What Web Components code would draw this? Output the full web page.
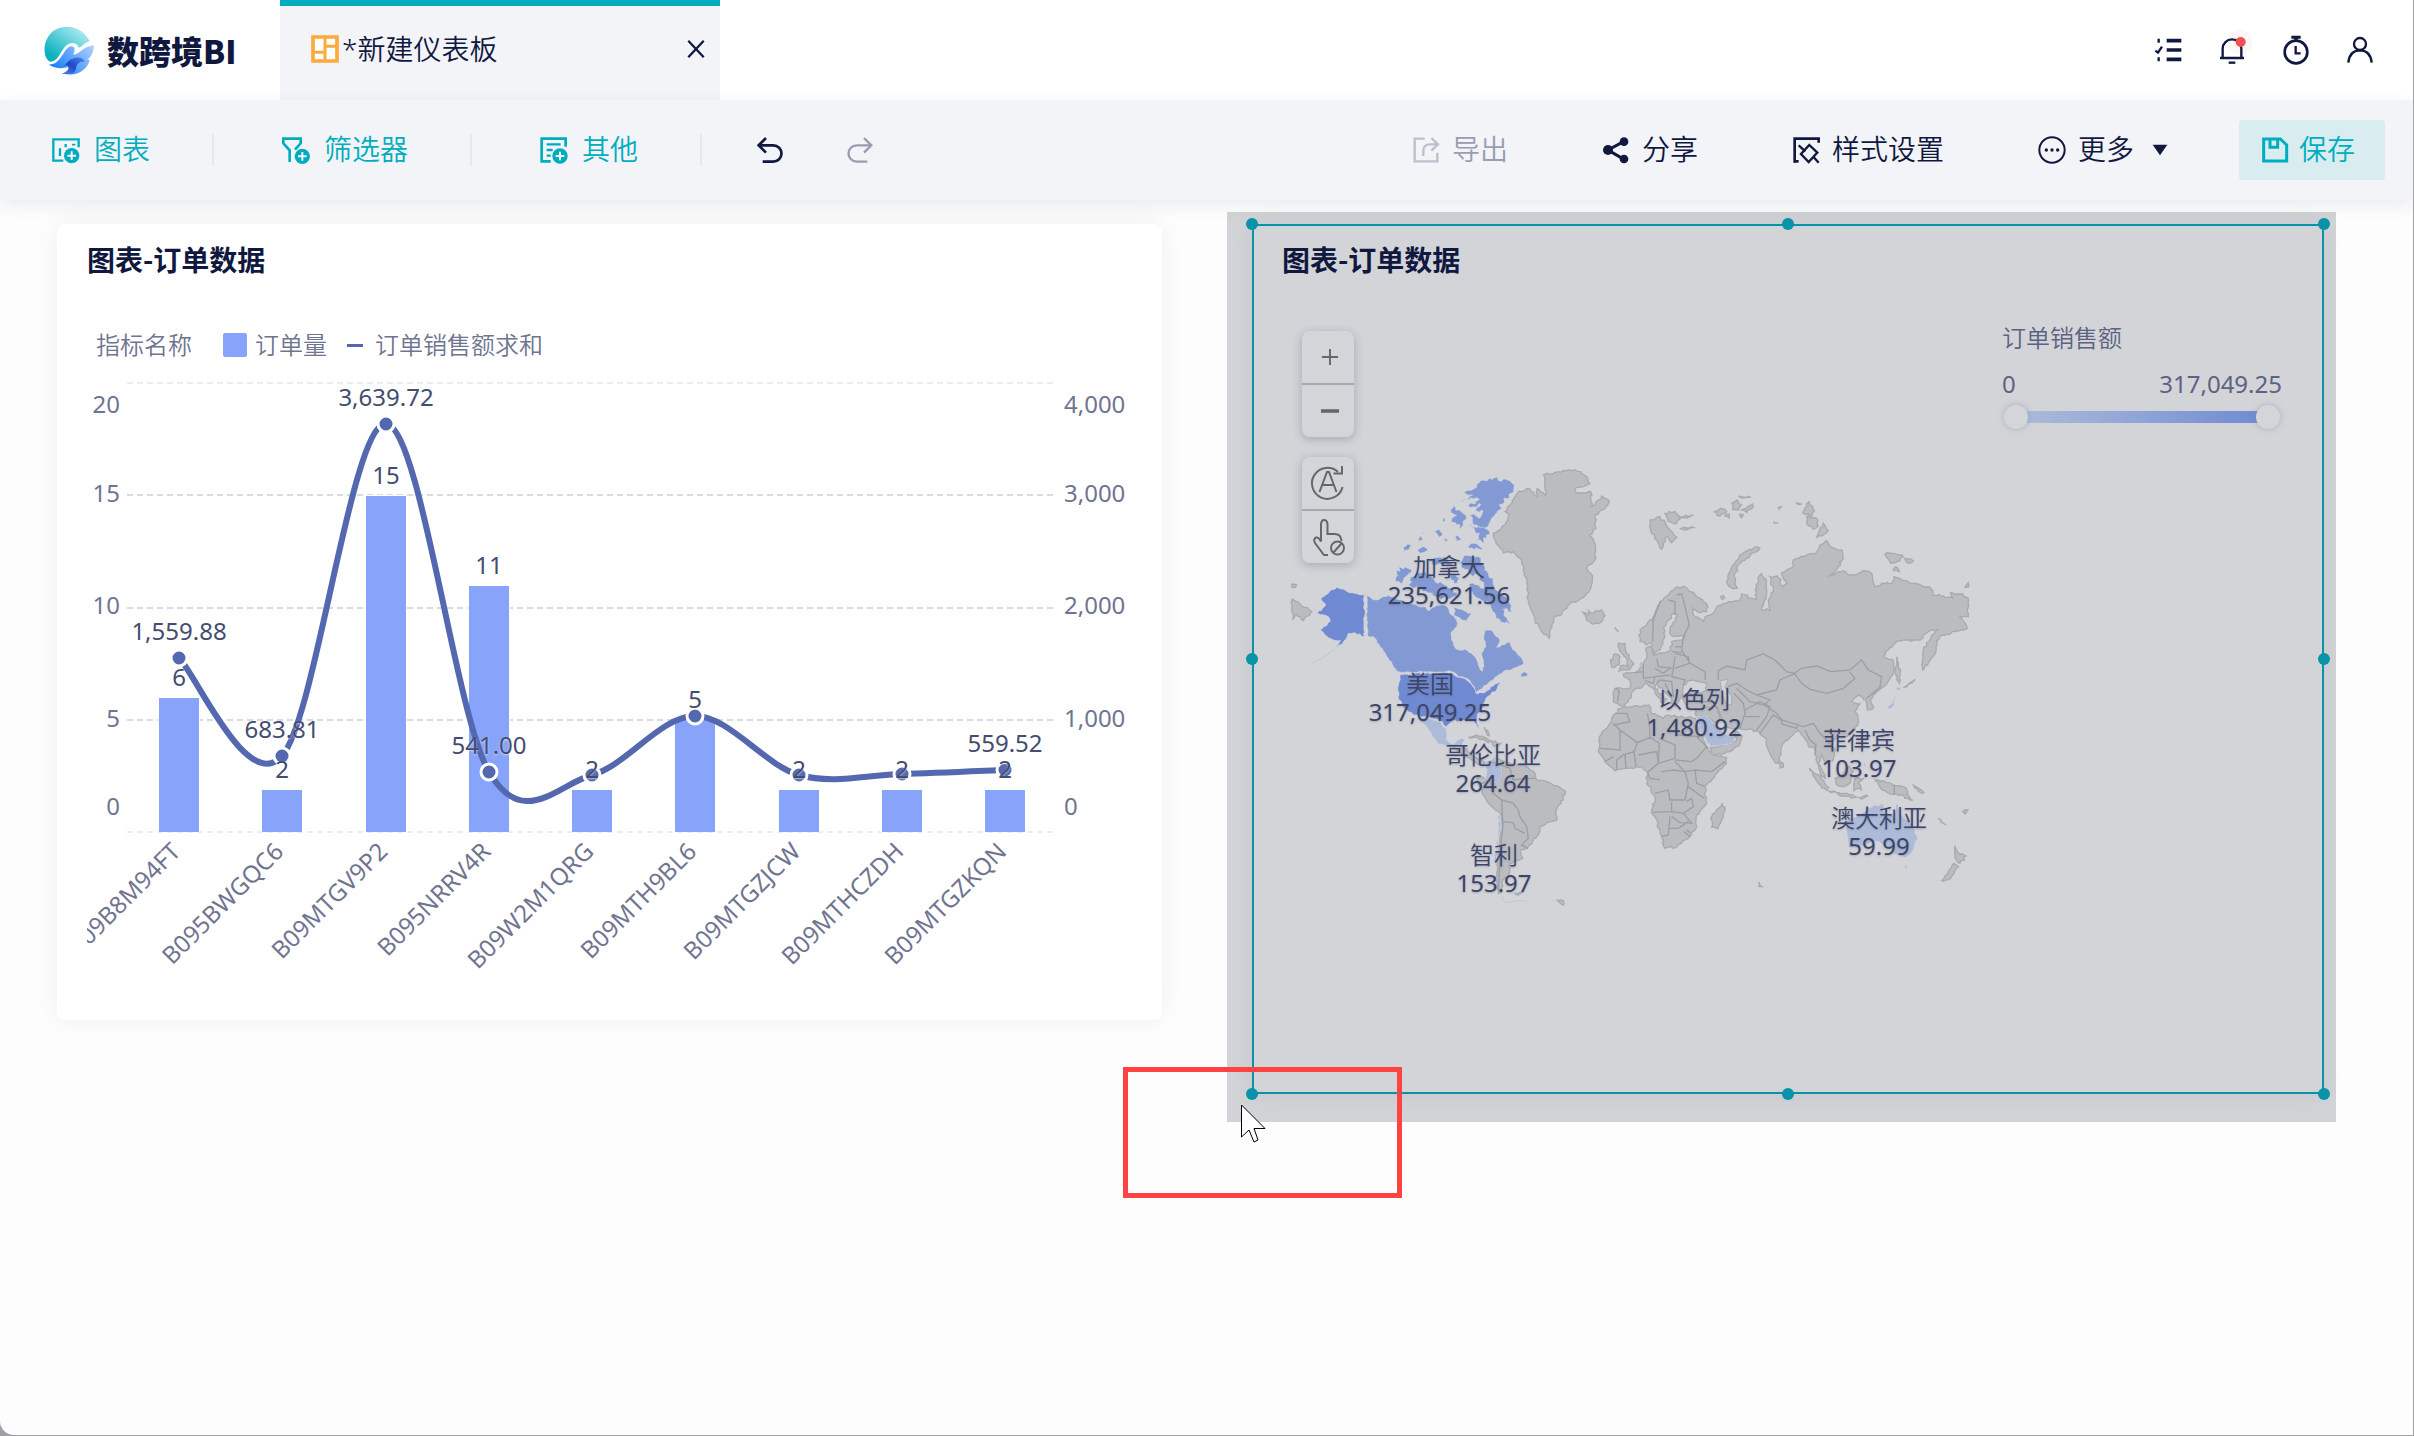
<!DOCTYPE html>
<html lang="zh-CN">
<head>
<meta charset="utf-8">
<title>新建仪表板</title>
<style>
:root{--ink:#101840;--teal:#00adbe;--muted:#6f7490;--label:#3c4468;--bar:#f3f4f8}
html{background:#a0a1a4}
body{margin:0;color:var(--ink);font:350 28px/36px "Noto Sans","Noto Sans CJK SC",sans-serif}
</style>
</head>
<body>
<bi-app></bi-app>
<script>
const define=(name,html,setup)=>{
  const tpl=document.createElement('template');
  tpl.innerHTML=html;
  customElements.define(name,class extends HTMLElement{
    constructor(){
      super();
      this.attachShadow({mode:'open'}).append(tpl.content.cloneNode(true));
    }
    connectedCallback(){
      if(this.ready)return;
      this.ready=true;
      if(setup)setup.call(this,this.shadowRoot);
    }
  });
};

/* ---------- icons: each drawn on an 84-unit square ---------- */
const plus=(x,y)=>`<circle cx="${x}" cy="${y}" r="23" fill="currentColor" stroke="none"/><path d="M${x-13} ${y}h26M${x} ${y-13}v26" stroke="var(--bar)" stroke-width="6"/>`;
const ICONS={
  chart:`<path d="M34 74H4V10H80V34" stroke-width="7"/><path d="M24 37V60M41 24V34" stroke-width="7"/><path d="M60 26h10" stroke-width="5"/>${plus(59,59)}`,
  filter:`<path d="M23 78V43L4 22V8H56V22L39 41" stroke-width="8"/>${plus(61,61)}`,
  other:`<path d="M32 76H5V8H77V32" stroke-width="8"/><path d="M20 25H62M20 42H38M20 59H32" stroke-width="7"/>${plus(60,60)}`,
  undo:`<path d="M30 6L8 28L30 50" stroke-width="8"/><path d="M10 28H52A24 24 0 0 1 52 77H20" stroke-width="8"/>`,
  redo:`<path d="M54 6L76 28L54 50" stroke-width="7"/><path d="M74 28H32A24 24 0 0 0 32 77H64" stroke-width="7"/>`,
  export:`<path d="M38 8H8V76H76V50" stroke-width="7"/><path d="M34 60V44Q34 25 54 25H74" stroke-width="7"/><path d="M58 6L78 25L58 44" stroke-width="7"/>`,
  share:`<path d="M66 16L18 42L66 70" stroke-width="9"/><g fill="currentColor" stroke="none"><circle cx="66" cy="17" r="13"/><circle cx="18" cy="42" r="15"/><circle cx="66" cy="69" r="13"/></g>`,
  style:`<path d="M8 80V8H80V20" stroke-width="8"/><path d="M6 76H20" stroke-width="8"/><path d="M52 27L76 50L50 78L27 54Z" stroke-width="7"/><path d="M20 28L40 46M64 62L80 80" stroke-width="7"/>`,
  more:`<circle cx="42" cy="42" r="38" stroke-width="6"/><g fill="currentColor" stroke="none"><circle cx="25" cy="42" r="5"/><circle cx="42" cy="42" r="5"/><circle cx="59" cy="42" r="5"/></g>`,
  save:`<path d="M8 9H58L77 27V75H8Z" stroke-width="9"/><path d="M27 10V34H50V10" stroke-width="9"/>`,
  caret:`<path d="M20 26H64L42 58Z" fill="currentColor" stroke="none"/>`,
  close:`<path d="M15 13L69 71M69 13L15 71" stroke-width="8"/>`,
  list:`<path d="M38 14H82M38 42H82M38 70H82" stroke-width="11"/><path d="M14 8V20M14 64V76M4 44L12 50L24 32" stroke-width="7"/>`,
  bell:`<path d="M6 66H78M14 64V38A28 28 0 0 1 70 38V64" stroke-width="7"/><path d="M32 80H52" stroke-width="7"/><circle cx="66" cy="18" r="37" fill="#f05050" opacity=".05" stroke="none"/><circle cx="68" cy="18" r="15" fill="#f05050" stroke="none"/>`,
  timer:`<circle cx="42" cy="48" r="34" stroke-width="8"/><path d="M28 4H56M42 4V14" stroke-width="9"/><path d="M41 30V52H56" stroke-width="7"/>`,
  user:`<circle cx="42" cy="24" r="18" stroke-width="7"/><path d="M7 80Q10 44 42 43Q74 44 77 80" stroke-width="7"/>`,
  board:`<path d="M6 6H78V78H6Z" fill="#fff" stroke="#faab3c" stroke-width="11"/><path d="M42 6V78M6 52H42M42 34H78" stroke="#faab3c" stroke-width="9"/>`,
  plus:`<path d="M42 8V76M8 42H76" stroke-width="8"/>`,
  minus:`<path d="M4 42H80" stroke-width="15"/>`,
  auto:`<path d="M71 50A31 31 0 1 1 62 20" stroke-width="4"/><path d="M70 8V23H53" stroke-width="4"/><path d="M25 60L40 20H44L59 60M31 46H53" stroke-width="4"/>`,
  hand:`<path d="M42 78H34L16 54Q12 46 18 43Q24 42 28 51V16Q29 8 34 8Q40 8 41 16V36H56Q68 36 69 50" stroke-width="4"/><circle cx="61" cy="64" r="13" stroke-width="4"/><path d="M53 73L69 55" stroke-width="4"/>`
};
define('bi-icon',`<style>:host{display:inline-block;flex:none;width:28px;height:28px}svg{display:block;width:100%;height:100%;overflow:visible}</style>
<svg viewBox="0 0 84 84" fill="none" stroke="currentColor" aria-hidden="true"></svg>`,function(root){
  root.querySelector('svg').innerHTML=ICONS[this.getAttribute('name')]||'';
});

define('bi-logo',`<style>
:host{display:flex;align-items:center;gap:13px}
svg{width:50px;height:49px;display:block}
span{font:900 32px/40px "Noto Sans CJK SC",sans-serif}
</style>
<svg viewBox="132 76 150 148" aria-hidden="true">
<defs>
<linearGradient id="a" x1="0" y1="1" x2="1" y2="0"><stop offset=".15" stop-color="#0aafbe"/><stop offset="1" stop-color="#c8f6fa"/></linearGradient>
<linearGradient id="b" x1="0" y1=".6" x2="1" y2="0"><stop offset="0" stop-color="#1a80ff"/><stop offset="1" stop-color="#b4d2ff"/></linearGradient>
<linearGradient id="c" x1="0" y1="1" x2="1" y2="0"><stop offset="0" stop-color="#5090ff"/><stop offset=".5" stop-color="#2447c4"/><stop offset="1" stop-color="#4a86f2"/></linearGradient>
</defs>
<path fill="url(#a)" d="M150 184C120 172 126 78 202 78C234 78 258 98 270 122C256 124 248 138 237 142C232 126 212 122 198 136C182 150 176 184 150 184Z"/>
<path fill="url(#b)" d="M146 192C172 194 182 170 196 150C208 134 222 134 224 146C225 154 218 160 222 162C236 164 246 138 282 134C282 152 276 168 262 178L270 178C262 208 236 224 206 222L186 220C198 216 206 210 205 200C186 206 162 204 146 192Z"/>
<path fill="url(#c)" d="M200 188C214 168 246 164 256 184C240 180 230 190 228 204C226 216 214 222 202 222L186 220C204 214 212 204 202 196C192 194 184 198 178 198C188 198 196 194 200 188Z"/>
</svg><span>数跨境BI</span>`);

define('bi-header',`<style>
:host{display:flex;height:100px;background:#fff}
bi-logo{width:236px;padding-left:44px}
.tab{box-sizing:border-box;width:440px;border-top:6px solid var(--teal);background:var(--bar);display:flex;align-items:center;padding:0 12px 8px 31px;gap:3px}
nav{margin-left:auto;display:flex;align-items:center;gap:36px;padding-right:39px}
button{all:unset;display:flex}
button.close{margin-left:auto}
.close bi-icon{width:24px;height:24px}
</style>
<bi-logo></bi-logo>
<div class="tab"><bi-icon name="board"></bi-icon><span>*新建仪表板</span><button class="close" aria-label="关闭"><bi-icon name="close"></bi-icon></button></div>
<nav>
<button aria-label="任务"><bi-icon name="list"></bi-icon></button>
<button aria-label="通知"><bi-icon name="bell"></bi-icon></button>
<button aria-label="计时"><bi-icon name="timer"></bi-icon></button>
<button aria-label="用户"><bi-icon name="user"></bi-icon></button>
</nav>`);

define('tool-button',`<style>
:host{display:block}
button{all:unset;box-sizing:border-box;display:flex;align-items:center;gap:var(--gap,12px);color:inherit}
span{padding-bottom:2px}
:host([disabled]) bi-icon{opacity:.6}
:host([primary]) button{height:60px;padding:0 30px 0 22px;gap:10px;border-radius:4px;background:#d9edf0}
</style><button><span><slot></slot></span></button>`,function(root){
  const icon=document.createElement('bi-icon'),button=root.querySelector('button');
  icon.setAttribute('name',this.getAttribute('icon'));
  button.prepend(icon);
  button.disabled=this.hasAttribute('disabled');
  if(this.title)button.setAttribute('aria-label',this.title);
});

define('bi-toolbar',`<style>
:host{position:relative;z-index:1;display:flex;justify-content:space-between;align-items:center;height:100px;padding:0 28px 0 52px;background:var(--bar);box-shadow:0 6px 16px rgba(20,40,70,.08)}
div{display:flex;align-items:center}
.l{--gap:14px;color:var(--teal)}
i{width:2px;height:32px;background:#e6e8ec;margin:0 68px 0 62px}
.l i:last-of-type{margin-right:54px}
.u{color:var(--ink);width:28px} .r{color:#999cae;margin-left:62px}
.t{gap:94px}
.off{color:#999db2}
.m{gap:12px;margin-right:-29px}
.save{color:var(--teal)}
</style>
<div class="l"><tool-button icon="chart">图表</tool-button><i></i><tool-button icon="filter">筛选器</tool-button><i></i><tool-button icon="other">其他</tool-button><i></i><tool-button class="u" icon="undo" title="撤销"></tool-button><tool-button class="u r" icon="redo" title="重做"></tool-button></div>
<div class="t"><tool-button class="off" icon="export" disabled>导出</tool-button><tool-button icon="share">分享</tool-button><tool-button icon="style">样式设置</tool-button><div class="m"><tool-button icon="more">更多</tool-button><bi-icon name="caret"></bi-icon></div><tool-button class="save" icon="save" primary>保存</tool-button></div>`);

define('chart-card',`<style>
:host{display:block;box-sizing:border-box;padding:17px 30px 20px;border-radius:8px;background:#fff;box-shadow:0 0 26px rgba(20,25,50,.06)}
h2{margin:0;font:700 28px/36px "Noto Sans CJK SC",sans-serif}
</style><h2>图表-订单数据</h2><slot></slot>`);

/* ---------- bar + line chart ---------- */
define('combo-chart',`<style>
:host{display:block;padding-top:53px;color:var(--muted);font-size:24px;line-height:30px}
.legend{display:flex;align-items:center;padding-left:9px;height:30px;margin-bottom:10px}
.bar{width:24px;height:24px;border-radius:2px;background:#87a4fa;margin:0 8px 0 31px}
.line{width:16px;height:3px;background:#5468b0;margin:0 12px 0 20px}
svg{display:block;width:100%;overflow:hidden;font-size:24px;font-weight:400}
.val{fill:#444c70;text-anchor:middle;text-shadow:0 1px 2px rgba(255,255,255,.6)}
</style>
<div class="legend"><span>指标名称</span><i class="bar"></i><span>订单量</span><i class="line"></i><span>订单销售额求和</span></div>
<svg viewBox="87 370 1045 630" role="img" aria-label="订单量与订单销售额求和"></svg>`,function(root){
  const rows=[['B09B8M94FT',6,658,'1,559.88'],['B095BWGQC6',2,756,'683.81'],['B09MTGV9P2',15,424,'3,639.72'],['B095NRRV4R',11,772,'541.00'],['B09W2M1QRG',2,775],['B09MTH9BL6',5,716],['B09MTGZJCW',2,775],['B09MTHCZDH',2,774],['B09MTGZKQN',2,770,'559.52']];
  const left=127,step=103,base=832,unit=22.4;
  const cx=i=>Math.round(left+52+step*i+i*.25);
  let s='';
  [[383,404,20,'4,000'],[495,493,15,'3,000'],[608,605,10,'2,000'],[720,718,5,'1,000'],[832,806,0,'0']].forEach(([y,ty,a,b],k)=>{
    s+=`<path d="M${left} ${y}H1053" stroke="#d9dbe2" stroke-width="${k%4?2:1}" stroke-dasharray="6 4"/>
    <text x="120" y="${ty+9}" text-anchor="end" fill="currentColor">${a}</text><text x="1064" y="${ty+9}" fill="currentColor">${b}</text>`;
  });
  rows.forEach((r,i)=>{
    const h=Math.round(r[1]*unit)-(r[1]===2?3:0);
    s+=`<rect x="${cx(i)-21}" y="${base-h-1}" width="42" height="${h+1}" fill="#fff"/><rect x="${cx(i)-20}" y="${base-h}" width="40" height="${h}" fill="#87a4fa"/>`;
  });
  /* Catmull-Rom spline through the points. */
  const p=rows.map((r,i)=>[cx(i),r[2]]);
  const tan=i=>{
    const a=p[Math.max(0,i-1)],b=p[Math.min(p.length-1,i+1)];
    return[(b[0]-a[0])/6,(b[1]-a[1])/6];
  };
  let d=`M${p[0]}`;
  for(let i=1;i<p.length;i++){
    const t0=tan(i-1),t1=tan(i);
    d+=`C${p[i-1][0]+t0[0]} ${p[i-1][1]+t0[1]} ${p[i][0]-t1[0]} ${p[i][1]-t1[1]} ${p[i]}`;
  }
  s+=`<path d="${d}" fill="none" stroke="#5468b0" stroke-width="6"/>`;
  p.forEach(q=>s+=`<circle cx="${q[0]}" cy="${q[1]}" r="8" fill="#5468b0" stroke="#fff" stroke-width="3"/>`);
  rows.forEach((r,i)=>{
    const top=base-Math.round(r[1]*unit)+(r[1]===2?3:0);
    s+=`<text class="val" x="${cx(i)}" y="${top-12}">${r[1]}</text>`;
    if(r[3])s+=`<text class="val" x="${cx(i)}" y="${r[2]-18}">${r[3]}</text>`;
    s+=`<text transform="translate(${cx(i)+3} 853) rotate(-45)" text-anchor="end" fill="currentColor">${r[0]}</text>`;
  });
  root.querySelector('svg').innerHTML=s;
});

/* ---------- world map ---------- */
const WEST={
 ca:['260 436 290 450 325 436 350 448 375 455 400 462 430 470 447 482 470 466 500 468 515 495 530 510 530 530 515 545 515 570 530 598 560 600 585 620 595 645 608 664 610 640 605 615 618 590 612 560 618 540 640 545 660 570 650 592 690 575 700 600 725 625 732 640 700 655 680 660 655 675 640 690 620 705 590 728 583 712 560 685 535 680 515 665 362 667 345 655 325 625 300 590 285 565 262 556',
 '690 92 702 115 688 138 668 162 652 190 632 212 615 235 590 225 570 195 600 203 606 180 580 188 602 162 565 170 598 148 545 152 578 135 552 128 590 112 600 95 640 85',
 '520 165 538 180 560 205 550 225 538 235 515 205 530 195 512 180','565 222 600 232 628 240 612 275 588 272 598 250',
 '418 262 425 258 424 272 414 272','464 240 478 238 488 252 478 262','492 262 515 270 500 275','525 262 532 255 545 268 530 278','412 300 428 290 445 300 428 308','366 308 378 288 394 284 385 300','560 290 585 280 608 295 585 300','428 248 434 246 430 254','492 200 496 210 492 216',
 '356 350 375 350 396 360 380 378 366 402 347 396','385 405 405 372 440 365 466 395 500 405 532 428 505 446 465 440 440 424 405 414',
 '550 318 598 322 610 345 625 370 648 420 680 440 698 485 670 478 688 522 662 515 645 490 630 460 600 446 575 430 558 398 582 402 612 415 600 382 565 372 538 338','520 470 545 478 575 490 562 514 540 505 522 490','460 320 500 324 520 345 490 350 455 340','500 365 530 370 535 398 512 390','722 675 742 670 744 680 726 682'],
 us:['253 434 225 430 200 424 170 412 145 430 122 445 138 465 112 490 145 500 150 515 120 540 135 555 160 570 182 572 168 595 195 570 205 550 225 548 253 560',
 '362 672 515 668 535 682 560 690 580 712 590 732 615 728 640 708 665 697 652 715 632 735 618 745 612 770 592 792 590 812 598 836 585 820 575 812 540 812 515 815 497 830 480 812 455 805 430 800 400 795 378 780 357 750 354 710'],
 lo:['405 800 450 806 478 815 497 835 500 870 520 882 545 865 557 870 545 888 525 895 500 890 470 876 455 855 440 830 418 808',
 '615 935 640 925 665 955 665 975 650 1000 615 985 620 965','657 1090 666 1130 656 1165 650 1230 640 1242 652 1170'],
 land:['590 975 614 985 650 1000 666 975 665 955 642 925 690 940 740 950 765 970 770 990 800 995 855 1022 850 1050 830 1075 828 1112 780 1130 775 1155 740 1195 722 1200 728 1225 690 1240 685 1275 668 1290 665 1325 655 1330 648 1290 652 1230 660 1165 667 1130 658 1088 625 1060 597 1005',
 '835 65 885 60 920 80 930 100 885 115 888 128 932 125 935 170 945 165 965 138 988 152 975 175 945 195 948 235 930 255 945 280 945 330 920 352 938 378 930 420 905 445 870 460 845 492 825 500 808 565 785 545 765 510 745 450 740 400 725 330 700 305 670 308 648 280 640 250 675 225 688 195 675 185 712 130 745 115 772 140 772 115 798 138 790 75',
 '908 487 925 495 925 482 940 490 965 480 975 497 960 518 940 523 920 512','520 895 560 897 580 920 610 935 622 938 600 945 570 925 545 912','565 862 590 855 632 872 625 878 595 865','635 875 662 880 650 888 638 884','37 447 60 462 95 485 70 512 50 492 37 510','35 403 50 405 46 412 36 412','830 1350 850 1352 850 1366','705 1332 724 1328 714 1336','612 832 622 842 628 858 618 845']
};
const EAST={
 land:['240 540 262 520 280 500 290 478 300 455 325 435 345 415 375 410 392 425 420 445 442 465 440 485 415 487 398 474 405 500 430 515 435 500 460 490 470 470 500 460 540 450 545 432 590 450 588 405 605 370 618 388 620 430 605 480 630 480 625 450 640 425 630 380 652 378 670 410 682 400 665 368 700 350 700 330 740 315 765 312 780 285 800 272 815 292 845 300 850 325 835 350 805 380 850 362 875 375 910 362 935 370 945 412 965 400 995 400 1002 380 1040 392 1060 400 1110 412 1120 435 1150 438 1180 445 1172 428 1200 432 1225 445 1225 500 1200 500 1222 535 1185 545 1140 560 1128 590 1125 612 1088 660 1090 600 1112 565 1135 538 1105 545 1080 570 1015 572 985 600 970 620 1000 632 1000 672 975 708 940 735 932 748 940 775 922 780 920 760 905 740 895 735 875 755 900 762 885 785 895 810 885 840 850 862 825 865 808 880 826 902 820 930 800 938 785 915 775 940 795 985 782 975 768 930 765 890 748 892 735 865 715 842 690 862 665 888 655 940 645 938 625 900 615 862 600 852 590 843 545 838 520 835 500 828 480 802 466 800 440 790 405 780 375 762 365 735 400 730 440 722 440 700 400 690 370 705 365 735 345 770 330 760 335 745 310 722 290 702 285 715 320 748 308 760 275 712 255 700 240 715 222 720 205 755 185 768 160 755 165 715 210 715 212 700 190 672 225 668 250 640 260 625 258 595 275 590 280 615 310 608 332 600 335 575 365 570 375 558 345 560 330 552 332 530 352 498 340 490 312 530 315 560 300 600 284 612 275 578 258 585 240 575',
 '183 775 215 770 268 765 275 790 310 805 325 795 350 800 405 805 420 840 440 890 460 915 500 922 495 945 455 990 435 1010 440 1060 410 1095 410 1130 390 1160 350 1192 315 1195 300 1150 290 1110 275 1085 285 1040 260 1000 262 965 245 950 200 955 165 962 135 935 115 905 118 860 150 820 160 795',
 '455 1132 456 1098 470 1080 488 1060 495 1080 475 1135','450 895 480 888 515 882 530 865 520 842 547 857 540 880 510 905 460 915','405 775 470 770 482 800 470 825 435 795 410 800',
 '205 655 200 625 178 600 175 580 195 580 200 610 222 642 210 658 175 665 190 645','152 630 165 612 180 620 178 645 155 652',
 '270 210 300 200 325 235 350 262 335 278 320 258 305 298 290 270 272 245','315 190 345 185 362 205 345 222 325 215','360 200 400 195 372 203','362 236 402 233 380 240',
 '463 185 482 175 500 185 480 198','515 160 532 150 545 165 535 180 518 178','545 180 578 162 580 172 560 188','495 198 508 192 508 203','540 192 550 195 545 203','535 138 572 142 545 144',
 '500 395 515 350 545 312 590 290 600 295 560 325 535 345 522 380 532 415 512 412','735 175 748 155 762 180 755 200 728 190','740 200 770 205 775 228 760 238 740 220','770 262 780 235 790 220 805 242 785 258',
 '975 312 995 310 1030 320 1020 332 992 340','1035 325 1060 332 1055 338 1040 336','1000 362 1008 350 1018 365','1215 412 1225 398 1224 412','708 158 726 162 715 164','655 172 664 170 658 178','640 215 655 218 645 220','482 440 490 437 494 444 486 448',
 '748 955 775 975 806 1012 800 1022 775 1000','805 1022 860 1030 890 1042 850 1038','825 985 850 970 868 948 880 965 870 1000 845 1010 828 1002','885 985 912 985 895 1000 905 1022 892 1015 882 1022','945 990 985 998 1030 1010 1058 1052 1025 1035 990 1032 962 1015','1060 1005 1092 1028 1085 1030','660 935 670 940 670 952 660 954','1010 620 1022 660 1018 700 1006 665','1185 1190 1200 1212 1218 1218 1200 1240 1188 1228','1182 1240 1196 1250 1165 1290 1145 1292','1135 1105 1158 1125 1150 1120','1208 1085 1224 1080 1216 1092','1030 712 1065 688 1040 708','596 1296 606 1310 597 1310','895 1042 925 1038 905 1048','165 532 176 545 170 540'],
 lo:['410 800 435 795 470 825 490 850 525 865 515 880 480 885 450 890 435 865 415 830','980 772 998 758 1002 738 1008 740 1003 765 990 778','1010 710 1025 713 1018 722 1008 720','858 1110 890 1100 920 1080 945 1065 970 1062 970 1085 1000 1098 1010 1060 1025 1095 1060 1125 1072 1160 1060 1200 1040 1222 1005 1215 985 1190 955 1175 910 1185 870 1195 862 1160','1030 1244 1042 1246 1036 1258','237 645 245 632 248 642 242 650','912 935 918 945 913 952']
};
const BORDERS_W='M625 935L650 940L690 955L700 990L735 985L765 985M597 1005L630 990L640 1030L665 1050L700 1060L715 1080L720 1100L740 1130L745 1165L725 1185L745 1195M665 1050L668 1115L700 1118L705 1135L735 1150M670 1118L665 1160L660 1230L655 1320';
const BORDERS_E='M350 435L365 432L375 470L388 525L370 560L365 600L390 640L435 665L436 690M300 455L280 510L278 575M325 450L345 455L345 495M475 690L475 662L500 648L555 660L560 630L610 612L645 630L680 665L703 670L725 655L770 648L812 665L870 660L905 630L925 660L965 680L960 712L920 745M703 670L725 700L750 718L800 730L850 715L885 685L868 665M505 710L530 700L560 720L590 735L650 720L660 690L703 672M590 735L630 750L612 765L650 790L665 810L730 830L760 820L780 850L805 875M522 730L550 760L555 790L540 835M555 780L600 755L630 770L620 800L590 840M600 850L640 795L665 812L665 822L710 835L712 820M735 840L750 870L768 885L765 910M530 715L570 755L610 765M470 770L480 800M290 625L295 650L340 655L345 620M345 610L385 620L388 640L345 655M340 655L335 680L375 690L370 705M250 640L250 685L285 680L330 675M285 655L310 670L330 655M290 700L300 690L335 695L340 740M225 668L250 665M345 590L368 590M335 605L365 608M168 715L178 725L172 755M285 680L280 700L255 692M315 700L325 720M405 755L460 755L470 775M390 1160L372 1145M165 790L200 790L210 815L160 825M160 820L180 840L180 900L120 895M180 840L232 878L270 862L268 820L262 790M270 862L298 880L295 935M232 878L222 905L190 915L170 930M350 800L350 855L422 860M298 865L345 885L345 925L295 940M345 930L395 935L410 925L440 890M222 905L228 950M195 915L198 955M235 915L290 905L295 940L265 965M305 965L345 960L375 965L385 1000L375 1050L330 1050L325 1020L285 1030M345 935L375 965L405 960L410 1000L435 1010M405 960L455 965L495 935M385 1010L432 1045M335 1055L335 1085L278 1087M335 1085L370 1090L400 1070L395 1045L380 1055M370 1090L395 1120L360 1118L335 1100M330 1100L325 1155L305 1160M325 1135L355 1135L385 1115M380 1140L392 1150M262 965L270 985L300 990M1003 1005V1035M555 800L600 800M410 860L445 895M170 930L170 960M135 935L160 920';

/* Breaks straight coast segments into small, repeatable notches. */
let seed=7;
const rnd=()=>(seed=(seed*16807)%2147483647)/2147483647-.5;
const coast=(str,amp)=>{
  const n=str.split(' ').map(Number),out=[];
  for(let i=0;i<n.length;i+=2){
    const x=n[i],y=n[i+1],u=n[(i+2)%n.length],v=n[(i+3)%n.length];
    const k=Math.max(1,Math.round(Math.hypot(u-x,v-y)/8));
    out.push([x,y]);
    for(let j=1;j<k;j++)out.push([Math.round(x+(u-x)*j/k+rnd()*amp),Math.round(y+(v-y)*j/k+rnd()*amp)]);
  }
  return'M'+out.join('L')+'Z';
};
define('world-map',`<style>
:host{display:grid;margin-top:23px;font-size:24px;line-height:30px;color:#5c6284}
svg.map{grid-area:1/1;display:block;width:100%;font-size:24px}
.map text{fill:var(--label);text-anchor:middle;text-shadow:0 1px 2px rgba(90,95,120,.35)}
.map .num,.range{font-weight:400}
.land{fill:#bbbcc0;stroke:#a8aaae;stroke-width:4}
.line{fill:none;stroke:#9c9ea3;stroke-width:4}
.us{fill:#6f8ad2}.ca{fill:#8299d3}.lo{fill:#adbbd9}
.us,.ca,.lo{stroke:#d6d8dd;stroke-width:2}
.tools{grid-area:1/1;z-index:1;align-self:start;justify-self:start;margin:31px 0 0 20px;display:grid;gap:20px}
.tools div{width:52px;border-radius:8px;background:#d4d5d9;box-shadow:0 2px 10px rgba(30,30,50,.25)}
.tools button{all:unset;box-sizing:border-box;width:52px;display:flex;height:52px;align-items:center;justify-content:center;color:#66676b}
.tools button+button{height:54px;border-top:2px solid #a8a9ad}
.tools bi-icon{width:20px;height:20px;margin-left:3px}
.tools .big bi-icon{width:42px;height:42px;margin:0}
.scale{grid-area:1/1;z-index:1;align-self:start;justify-self:end;width:280px;margin:23px 10px 0 0}
.range{display:flex;justify-content:space-between;margin:16px 0 6px}
.slider{display:grid;align-items:center;width:276px;height:24px;margin-left:2px;background:linear-gradient(90deg,#aebcd9,#6f8ad3) center/calc(100% - 24px) 12px no-repeat}
input{grid-area:1/1;appearance:none;width:100%;height:24px;margin:0;background:none;pointer-events:none}
input::-webkit-slider-thumb{appearance:none;width:24px;height:24px;border-radius:50%;background:#d4d5d9;box-shadow:0 0 6px rgba(120,140,180,.5);pointer-events:auto}
</style>
<svg class="map" viewBox="1282 300 1010 780" role="img" aria-label="订单销售额地图"></svg>
<div class="tools">
<div><button aria-label="放大"><bi-icon name="plus"></bi-icon></button><button aria-label="缩小"><bi-icon name="minus"></bi-icon></button></div>
<div class="big"><button aria-label="自动缩放"><bi-icon name="auto"></bi-icon></button><button aria-label="禁止拖动"><bi-icon name="hand"></bi-icon></button></div>
</div>
<div class="scale"><span>订单销售额</span>
<div class="range"><span>0</span><span>317,049.25</span></div>
<div class="slider"><input type="range" min="0" max="100" value="0" aria-label="最小值"><input type="range" min="0" max="100" value="100" aria-label="最大值"></div></div>`,function(root){
  const shapes=(set)=>['land','lo','ca','us'].map(c=>(set[c]||[]).map((p,i)=>`<path class="${c}" d="${coast(p,c==='ca'&&i?13:c==='land'?7:6)}"/>`).join('')).join('');
  let s=`<g transform="translate(1280 450) scale(.3333)">${shapes(WEST)}<path class="line" d="${BORDERS_W}"/><path d="M90 644L125 625L165 597M666 1340L675 1358L720 1352L742 1355" fill="none" stroke="#c4c5ca" stroke-width="3"/></g>`;
  s+=`<g transform="translate(1560 450) scale(.3333)">${shapes(EAST)}<path class="line" d="${BORDERS_E}"/><path d="M480 692L505 688L495 712L515 738L515 765L497 760L487 730Z" fill="#d3d4d8" stroke="#aaacb0" stroke-width="3"/></g>`;
  [['加拿大','235,621.56',1449,568],['美国','317,049.25',1430,685],['哥伦比亚','264.64',1493,756],['智利','153.97',1494,856],['以色列','1,480.92',1694,700],['菲律宾','103.97',1859,741],['澳大利亚','59.99',1879,819]].forEach(([n,v,x,y])=>{
    s+=`<text x="${x}" y="${y+8}">${n}</text><text class="num" x="${x}" y="${y+36}">${v}</text>`;
  });
  root.querySelector('svg').innerHTML=s;
});

/* Drop area with the selected card and its eight resize handles. */
define('resize-frame',`<style>
:host{display:block;padding:12px 12px 28px 25px;background:#d2d3d7}
.frame{position:relative;border:2px solid #0893a8;background:#d3d4d8;box-shadow:0 0 24px rgba(20,25,70,.06)}
.handles{position:absolute;inset:-2px;pointer-events:none}
::slotted(*){background:none!important;box-shadow:none!important;padding:15px 30px 12px 28px!important}
b{position:absolute;width:12px;height:12px;border-radius:50%;background:#0893a8;transform:translate(-50%,-50%)}
</style><div class="frame"><slot></slot><div class="handles"></div></div>`,function(root){
  const f=root.querySelector('.handles');
  for(const x of[0,50,100])for(const y of[0,50,100]){
    if(x===50&&y===50)continue;
    const b=document.createElement('b');
    b.style.left=x+'%';b.style.top=y+'%';
    f.append(b);
  }
});

define('bi-app',`<style>
:host{display:flex;flex-direction:column;box-sizing:border-box;min-height:calc(100vh - 1px);margin:0 1px 1px 0;background:#fdfdfd;border-radius:0 0 0 14px;overflow:hidden}
main{position:relative;display:grid;grid-template-columns:1105fr 1109fr;gap:65px;align-items:start;padding:12px 77px 0 57px}
.left{margin-top:12px}
.mark{position:absolute;z-index:2;left:1123px;top:867px;box-sizing:border-box;width:279px;height:131px;border:5px solid #ff4343}
.cursor{position:absolute;z-index:3;left:1241px;top:904px;width:26px;height:39px}
</style>
<bi-header></bi-header><bi-toolbar></bi-toolbar>
<main>
<chart-card class="left"><combo-chart></combo-chart></chart-card>
<resize-frame><chart-card><world-map></world-map></chart-card></resize-frame>
<div class="mark"></div>
<svg class="cursor" viewBox="0 0 26 39" aria-hidden="true"><path d="M.5 1V33L8 26L13 38L17 36L13 24.500H24Z" fill="#fff" stroke="#000"/></svg>
</main>`);
</script>
</body>
</html>
